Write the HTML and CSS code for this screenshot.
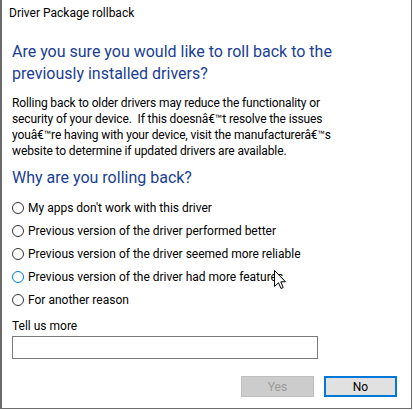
FILE: index.html
```html
<!DOCTYPE html>
<html>
<head>
<meta charset="utf-8">
<link rel="stylesheet" href="styles.css">
</head>
<body>
<div class="window">
  <div class="title">Driver Package rollback</div>
  <div class="content">
    <div class="heading">Are you sure you would like to roll back to the<br>previously installed drivers?</div>
    <p class="para">Rolling back to older drivers may reduce the functionality or<br>security of your device.&nbsp; If this doesnâ€™t resolve the issues<br>youâ€™re having with your device, visit the manufacturerâ€™s<br>website to determine if updated drivers are available.</p>
    <div class="heading sub">Why are you rolling back?</div>
    <div class="radios">
      <div class="radio"><span class="circle"></span><span>My apps don't work with this driver</span></div>
      <div class="radio"><span class="circle"></span><span>Previous version of the driver performed better</span></div>
      <div class="radio"><span class="circle"></span><span>Previous version of the driver seemed more reliable</span></div>
      <div class="radio"><span class="circle hover"></span><span>Previous version of the driver had more features</span></div>
      <div class="radio"><span class="circle"></span><span>For another reason</span></div>
    </div>
    <div class="label">Tell us more</div>
    <div class="input"></div>
  </div>
  <div class="buttons">
    <div class="btn disabled">Yes</div>
    <div class="btn primary">No</div>
  </div>
</div>
<svg class="cursor" width="13" height="20" viewBox="0 0 13 20"><path d="M0.5 0.5 L0.5 16.5 L4.5 12.8 L7 18.5 L9.2 17.5 L6.8 11.8 L11.5 11.8 Z" fill="#fff" stroke="#000" stroke-width="1" stroke-linejoin="miter"/></svg>
</body>
</html>
```
FILE: styles.css
```css
html, body {
  margin: 0;
  padding: 0;
  background: #fff;
}
body {
  font-family: Roboto, "Noto Sans", sans-serif;
  font-size: 12px;
  color: #000;
  width: 413px;
  height: 410px;
  overflow: hidden;
  position: relative;
}
.window {
  box-sizing: border-box;
  width: 412px;
  height: 409px;
  border-left: 2px solid #6b6b6b;
  border-right: 1px solid #6b6b6b;
  border-bottom: 1px solid #6b6b6b;
  background: #fff;
}
.title {
  padding: 5px 0 0 7px;
  height: 16px;
  line-height: 16px;
  font-size: 12px;
}
.content {
  padding-left: 10px;
}
.heading {
  margin-top: 20px;
  font-size: 16px;
  line-height: 22px;
  color: #1a4094;
}
.heading.sub {
  margin-top: 8px;
}
.para {
  margin: 10px 0 0;
  font-size: 12px;
  line-height: 16px;
  letter-spacing: -0.12px;
}
.radios {
  margin-top: 7px;
  display: flex;
  flex-direction: column;
}
.radio {
  height: 23px;
  display: flex;
  align-items: center;
  gap: 4px;
  font-size: 12px;
}
.circle {
  box-sizing: border-box;
  width: 12px;
  height: 12px;
  border: 1px solid #333;
  border-radius: 50%;
  background: #fff;
  flex: none;
}
.circle.hover {
  border-color: #0078d7;
}
.label {
  margin-top: 7px;
  line-height: 16px;
}
.input {
  box-sizing: border-box;
  margin-top: 2px;
  width: 306px;
  height: 23px;
  border: 1px solid #7a7a7a;
  background: #fff;
}
.buttons {
  margin-top: 17px;
  display: flex;
  justify-content: flex-end;
  gap: 10px;
  padding-right: 14px;
}
.btn {
  box-sizing: border-box;
  width: 73px;
  height: 21px;
  display: flex;
  align-items: center;
  justify-content: center;
  font-size: 12px;
}
.btn.disabled {
  background: #cccccc;
  border: 1px solid #bfbfbf;
  color: #9a9a9a;
}
.btn.primary {
  background: #e1e1e1;
  border: 2px solid #0078d7;
  color: #000;
}
.cursor {
  position: absolute;
  left: 274px;
  top: 270px;
}
```
